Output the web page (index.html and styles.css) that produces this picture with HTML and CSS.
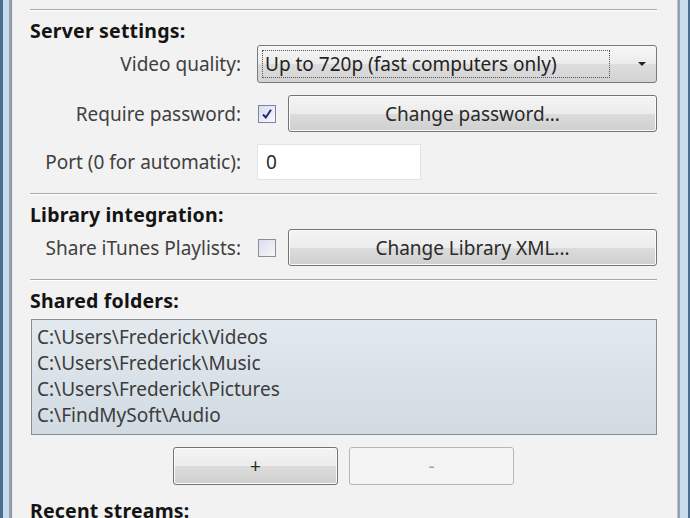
FILE: index.html
```html
<!DOCTYPE html>
<html lang="en">
<head>
    <meta charset="UTF-8">
    <meta name="viewport" content="width=device-width, initial-scale=1.0">
    <title>Server settings</title>
    <link rel="stylesheet" href="styles.css">
</head>
<body>
    <div class="window">
        <div class="frame frame-left"></div>

        <div class="content">
            <hr class="sep">

            <h3 class="group-title">Server settings:</h3>
            <div class="form">
                <label class="field-label" for="quality">Video quality:</label>
                <div class="select" id="quality">
                    <span class="select-text">Up to 720p (fast computers only)</span>
                    <span class="select-arrow"></span>
                </div>

                <label class="field-label">Require password:</label>
                <div class="check-row">
                    <span class="check checked">
                        <svg viewBox="0 0 12 12" width="12" height="12"><path d="M2 6.5 L4.8 9.5 L10 1.8" fill="none" stroke="#1c2a6b" stroke-width="2"/></svg>
                    </span>
                    <button class="btn btn-wide">Change password...</button>
                </div>

                <label class="field-label" for="port">Port (0 for automatic):</label>
                <div class="port-row">
                    <input class="textbox" id="port" type="text" value="0">
                </div>
            </div>

            <hr class="sep">

            <h3 class="group-title">Library integration:</h3>
            <div class="form">
                <label class="field-label">Share iTunes Playlists:</label>
                <div class="check-row">
                    <span class="check"></span>
                    <button class="btn btn-wide">Change Library XML...</button>
                </div>
            </div>

            <hr class="sep">

            <h3 class="group-title">Shared folders:</h3>
            <ul class="folders">
                <li>C:\Users\Frederick\Videos</li>
                <li>C:\Users\Frederick\Music</li>
                <li>C:\Users\Frederick\Pictures</li>
                <li>C:\FindMySoft\Audio</li>
            </ul>
            <div class="list-buttons">
                <button class="btn btn-small">+</button>
                <button class="btn btn-small" disabled>-</button>
            </div>

            <h3 class="group-title">Recent streams:</h3>
        </div>

        <div class="frame frame-right"></div>
    </div>
</body>
</html>
```

FILE: styles.css
```css
html, body {
    margin: 0;
    padding: 0;
    height: 518px;
    overflow: hidden;
}
body {
    font-family: "Noto Sans", "Open Sans", sans-serif;
    font-size: 19px;
    color: #404040;
    background: #f2f2f2;
}
.window {
    display: flex;
    height: 518px;
}
.frame {
    width: 13px;
    flex: none;
}
.frame-left {
    background: linear-gradient(to right, #4d6d8f 0, #4d6d8f 3px, #c9dcef 3px, #c9dcef 9px, #9aa5b1 9px, #8d98a4 12px, #e6e8ea 12px);
}
.frame-right {
    background: linear-gradient(to right, #e6e8ea 0, #8d98a4 1px, #9aa5b1 3px, #c9dcef 3px, #c9dcef 11px, #4d6d8f 11px);
}
.content {
    flex: 1;
    padding: 9px 20px 0 17px;
}
.sep {
    border: none;
    border-top: 1px solid #a9a9a9;
    border-bottom: 1px solid #ffffff;
    margin: 0;
}
.group-title {
    font-size: 19.5px;
    font-weight: bold;
    color: #141414;
    margin: 9px 0 0 0;
    line-height: 22px;
    letter-spacing: 0.2px;
}
.form {
    display: grid;
    grid-template-columns: 211px 1fr;
    column-gap: 16px;
    row-gap: 12px;
    align-items: center;
    margin-top: 3px;
    margin-bottom: 13px;
    line-height: 24px;
}
.field-label {
    text-align: right;
    white-space: nowrap;
}
.select {
    height: 36px;
    border: 1px solid #7a7a7a;
    border-radius: 3px;
    background: linear-gradient(#f7f7f7, #ebebeb 50%, #dddddd 51%, #d3d3d3);
    display: flex;
    align-items: center;
    padding: 0 4px;
    box-sizing: content-box;
}
.select-text {
    flex: 1;
    margin-right: 28px;
    border: 1px dotted #555;
    padding: 1px 2px;
    line-height: 24px;
    color: #222;
    white-space: nowrap;
}
.select-arrow {
    width: 0;
    height: 0;
    border-left: 4px solid transparent;
    border-right: 4px solid transparent;
    border-top: 4px solid #222;
    margin-right: 6px;
}
.check-row {
    display: flex;
    align-items: center;
    gap: 12px;
}
.check {
    width: 16px;
    height: 16px;
    margin-left: 1px;
    border: 1px solid #8e8f8f;
    background: linear-gradient(135deg, #d8dced, #f8f8fb);
    display: flex;
    align-items: center;
    justify-content: center;
    flex: none;
}
.check.checked {
    border-color: #7d82a8;
}
.btn {
    font-family: inherit;
    font-size: 19px;
    color: #2a2a2a;
    border: 1px solid #747474;
    border-radius: 3px;
    background: linear-gradient(#f4f4f4, #ececec 50%, #dcdcdc 51%, #cfcfcf);
    box-shadow: inset 0 0 0 1px #fbfbfb;
    padding: 0;
}
.btn-wide {
    flex: 1;
    height: 37px;
}
.btn:disabled {
    border-color: #b5b8ba;
    background: #f4f4f4;
    box-shadow: none;
    color: #a5a5a5;
}
.port-row {
    display: flex;
}
.textbox {
    width: 164px;
    height: 36px;
    box-sizing: border-box;
    border: 1px solid #e2e3ea;
    background: #fff;
    font-family: inherit;
    font-size: 19px;
    color: #2a2a2a;
    padding: 0 8px;
    outline: none;
}
.folders {
    list-style: none;
    margin: 7px 0 0 1px;
    padding: 4px 5px;
    height: 106px;
    border: 1px solid #8c8f92;
    background: linear-gradient(#e2e9ef, #d2dbe2);
}
.folders li {
    line-height: 26px;
    color: #3c3c3c;
}
.list-buttons {
    display: flex;
    justify-content: center;
    gap: 11px;
    margin-top: 12px;
}
.btn-small {
    width: 165px;
    height: 38px;
}
.list-buttons + .group-title {
    margin-top: 15px;
}
```
